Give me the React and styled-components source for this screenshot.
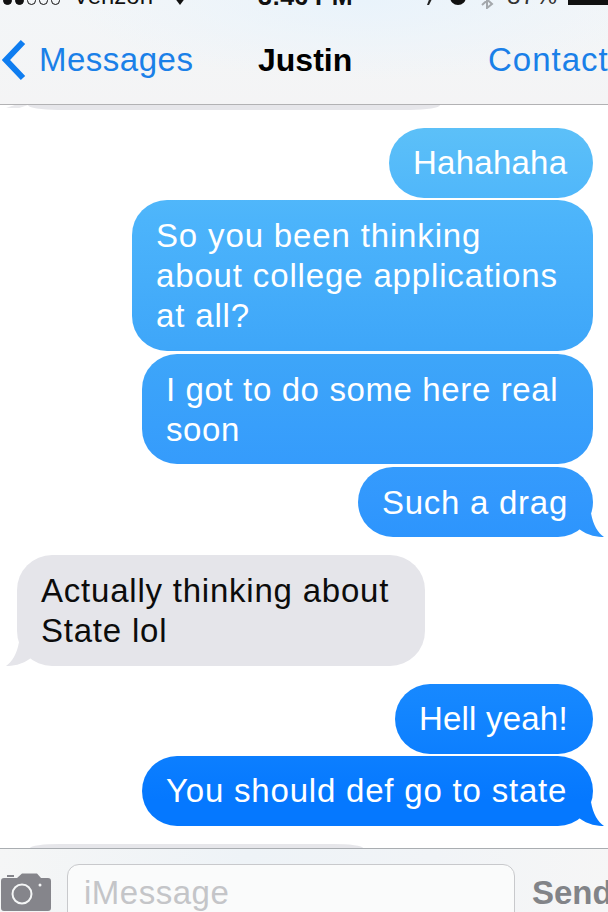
import React from 'react';
import styled, { createGlobalStyle, css } from 'styled-components';

const GlobalStyle = createGlobalStyle`
  html, body {
    margin: 0;
    padding: 0;
    background: #fff;
  }
  body {
    font-family: "Liberation Sans", Arial, sans-serif;
    overflow: hidden;
  }
`;

const Screen = styled.div`
  width: 608px;
  height: 912px;
  display: flex;
  flex-direction: column;
  overflow: hidden;
  background: #fff;
`;

const Header = styled.header`
  height: 104px;
  flex: none;
  display: flex;
  flex-direction: column;
  border-bottom: 1px solid #b2b2b4;
  background:
    radial-gradient(ellipse 300px 80px at 60% 0%, #e9f3fb 0%, rgba(233, 243, 251, 0) 100%),
    linear-gradient(180deg, #f3f6f8 0%, #f4f4f5 100%);
`;

const StatusBar = styled.div`
  height: 12px;
  flex: none;
  box-sizing: border-box;
  padding-bottom: 3px;
  display: flex;
  align-items: flex-end;
  overflow: hidden;
  font-size: 24px;
  line-height: 26px;
  color: #111;
`;

const StatusLeft = styled.div`
  width: 258px;
  flex: none;
  display: flex;
  align-items: flex-end;
  gap: 13px;
  svg {
    margin: 0 0 4px 8px;
  }
`;

const Dots = styled.div`
  display: flex;
  gap: 3px;
  padding-left: 3px;
  margin-bottom: 4px;
`;

const Dot = styled.span`
  width: 9px;
  height: 9px;
  border-radius: 50%;
  box-sizing: border-box;
  border: 1px solid #111;
  background: ${({ $on }) => ($on ? '#111' : 'transparent')};
`;

const Time = styled.div`
  width: 165px;
  flex: none;
  font-weight: 700;
  font-size: 25px;
  white-space: nowrap;
`;

const StatusRight = styled.div`
  flex: 1;
  display: flex;
  align-items: flex-end;
  padding-left: 4px;
  color: #333;
`;

const StatusGlyph = styled.svg`
  flex: none;
  margin-left: ${({ $gap }) => $gap}px;
  margin-bottom: ${({ $drop }) => $drop}px;
`;

const Percent = styled.span`
  margin-left: 13px;
  letter-spacing: 1px;
`;

const Battery = styled.div`
  width: 60px;
  height: 20px;
  flex: none;
  box-sizing: border-box;
  margin: 0 0 4px 10px;
  border: 2px solid #111;
  background: #111;
`;

const Nav = styled.nav`
  flex: 1;
  display: flex;
  align-items: center;
  padding-top: 4px;
  font-size: 33px;
  white-space: nowrap;
`;

const BackLink = styled.div`
  width: 258px;
  flex: none;
  display: flex;
  align-items: center;
  gap: 13px;
  padding-left: 2px;
  box-sizing: border-box;
  color: #1a80e8;
  letter-spacing: 0.5px;
  svg {
    flex: none;
  }
`;

const Title = styled.div`
  width: 230px;
  flex: none;
  font-size: 32px;
  font-weight: 700;
  color: #000;
`;

const ContactLink = styled.div`
  color: #1a80e8;
  letter-spacing: 1px;
`;

const Messages = styled.main`
  flex: 1;
  min-height: 0;
  display: flex;
  flex-direction: column;
  align-items: flex-end;
  padding: 0 15px;
`;

const Peek = styled.div`
  position: relative;
  flex: none;
  align-self: flex-start;
  width: ${({ $width }) => $width}px;
  height: ${({ $bottom }) => ($bottom ? 4 : 5)}px;
  margin: ${({ $bottom }) => ($bottom ? '18px 0 0 15px' : '0 0 18px 13px')};
  background: #e6e6ea;
  border-radius: ${({ $bottom }) => ($bottom ? '30px 30px 0 0 / 4px 4px 0 0' : '0 0 30px 30px / 0 0 5px 5px')};
  ${({ $bottom }) =>
    !$bottom &&
    css`
      &::before {
        content: '';
        position: absolute;
        left: -22px;
        top: 0;
        width: 22px;
        height: 3px;
        background: #e9e9ec;
        clip-path: polygon(0 100%, 40% 0, 100% 0, 60% 100%);
      }
    `}
`;

const tailRight = css`
  &::after {
    content: '';
    position: absolute;
    right: -11px;
    bottom: 0;
    width: 30px;
    height: 24px;
    background: inherit;
    clip-path: path('M17 0 C19 12 24 20 30 24 C24 24 14 23 5 16 Z');
  }
`;

const tailLeft = css`
  &::after {
    content: '';
    position: absolute;
    left: -11px;
    bottom: 0;
    width: 30px;
    height: 24px;
    background: inherit;
    clip-path: path('M13 0 C11 12 6 20 0 24 C6 24 16 23 25 16 Z');
  }
`;

const Bubble = styled.div`
  position: relative;
  flex: none;
  box-sizing: border-box;
  width: ${({ $width }) => $width}px;
  height: ${({ $height }) => $height}px;
  margin-top: ${({ $gap }) => $gap}px;
  padding: ${({ $top }) => $top}px 0 0 24px;
  font-size: 33px;
  line-height: 40px;
  letter-spacing: ${({ $track }) => $track}px;
  white-space: nowrap;
  border-radius: 35px;
  ${({ $from }) =>
    $from
      ? css`
          align-self: flex-start;
          margin-left: 2px;
          color: #0c0c0c;
          background: #e5e5ea;
          ${({ $tail }) => $tail && tailLeft}
        `
      : css`
          color: #fff;
          background: linear-gradient(
              180deg,
              #5cc0f8 128px,
              #4cb4fb 220px,
              #3ea6f9 350px,
              #3298fd 500px,
              #1587ff 700px,
              #0578ff 800px
            )
            fixed;
          ${({ $tail }) => $tail && tailRight}
        `}
`;

const InputBar = styled.footer`
  height: 63px;
  flex: none;
  display: flex;
  align-items: flex-start;
  border-top: 1px solid #a9adb1;
  background: linear-gradient(100deg, #f5f6f6 0%, #eef3f7 40%, #f1f4f7 70%, #f6f6f6 100%);
  overflow: hidden;
`;

const CameraButton = styled.div`
  width: 67px;
  flex: none;
  padding: 24px 0 0 1px;
  box-sizing: border-box;
  svg {
    display: block;
  }
`;

const InputBox = styled.div`
  width: 448px;
  height: 70px;
  flex: none;
  margin-top: 15px;
  box-sizing: border-box;
  padding: 8px 0 0 16px;
  border: 1px solid #c8c9cc;
  border-radius: 12px;
  background: #fafbfb;
  font-size: 33px;
  line-height: 40px;
  letter-spacing: 0.5px;
  color: #c4c5c8;
`;

const SendButton = styled.div`
  margin: 24px 0 0 17px;
  font-size: 33px;
  line-height: 40px;
  font-weight: 700;
  color: #828488;
  white-space: nowrap;
`;

const CameraIcon = () => (
  <svg width="50" height="38" viewBox="0 0 50 38">
    <path
      fill="#85858b"
      fillRule="evenodd"
      d="M6 2h7v2H6zM3 5h13l5-4.500h15l4 4.500h7a3 3 0 0 1 3 3v27a3 3 0 0 1-3 3H3a3 3 0 0 1-3-3V8a3 3 0 0 1 3-3zm18 5.500a10.500 10.500 0 1 0 0 21 10.500 10.500 0 0 0 0-21zm0 2a8.500 8.500 0 1 1 0 17 8.500 8.500 0 0 1 0-17zm18-2a1.500 1.500 0 1 0 0 3 1.500 1.500 0 0 0 0-3z"
    />
  </svg>
);

const BackChevron = () => (
  <svg width="24" height="42" viewBox="0 0 24 42">
    <path d="M21 3 4 21l17 18" fill="none" stroke="#0f7df0" strokeWidth="6" />
  </svg>
);

const App = () => (
  <>
    <GlobalStyle />
    <Screen>
      <Header>
        <StatusBar>
          <StatusLeft>
            <Dots>
              <Dot $on />
              <Dot $on />
              <Dot />
              <Dot />
              <Dot />
            </Dots>
            <span>Verizon</span>
            <svg width="12" height="8" viewBox="0 0 12 8">
              <path d="M0 0h12L6 8z" fill="#111" />
            </svg>
          </StatusLeft>
          <Time>3:46 PM</Time>
          <StatusRight>
            <StatusGlyph width="6" height="8" viewBox="0 0 6 8" $gap={0} $drop={4}>
              <path d="M2 8 6 0H3L0 8z" fill="#222" />
            </StatusGlyph>
            <StatusGlyph width="16" height="16" viewBox="0 0 16 16" $gap={17} $drop={4}>
              <circle cx="8" cy="8" r="8" fill="#111" />
            </StatusGlyph>
            <StatusGlyph width="14" height="18" viewBox="0 0 14 18" $gap={14} $drop={0}>
              <path d="M2 4 12 13l-5 4V1l5 4L2 14" fill="none" stroke="#a4a8ac" strokeWidth="2" />
            </StatusGlyph>
            <Percent>87%</Percent>
            <Battery />
          </StatusRight>
        </StatusBar>
        <Nav>
          <BackLink>
            <BackChevron />
            Messages
          </BackLink>
          <Title>Justin</Title>
          <ContactLink>Contact</ContactLink>
        </Nav>
      </Header>
      <Messages>
        <Peek $width={412} />
        <Bubble $width={204} $height={70} $top={15} $gap={0} $track={0.25}>Hahahaha</Bubble>
        <Bubble $width={461} $height={151} $top={16} $gap={2} $track={0.85}>So you been thinking<br />about college applications<br />at all?</Bubble>
        <Bubble $width={451} $height={110} $top={16} $gap={3} $track={0.62}>I got to do some here real<br />soon</Bubble>
        <Bubble $width={235} $height={70} $top={16} $gap={3} $track={0.73} $tail>Such a drag</Bubble>
        <Bubble $width={408} $height={111} $top={16} $gap={18} $track={0.78} $from $tail>Actually thinking about<br />State lol</Bubble>
        <Bubble $width={198} $height={70} $top={15} $gap={18} $track={0.2}>Hell yeah!</Bubble>
        <Bubble $width={451} $height={70} $top={15} $gap={2} $track={0.8} $tail>You should def go to state</Bubble>
        <Peek $width={333} $bottom />
      </Messages>
      <InputBar>
        <CameraButton>
          <CameraIcon />
        </CameraButton>
        <InputBox>iMessage</InputBox>
        <SendButton>Send</SendButton>
      </InputBar>
    </Screen>
  </>
);

export default App;
